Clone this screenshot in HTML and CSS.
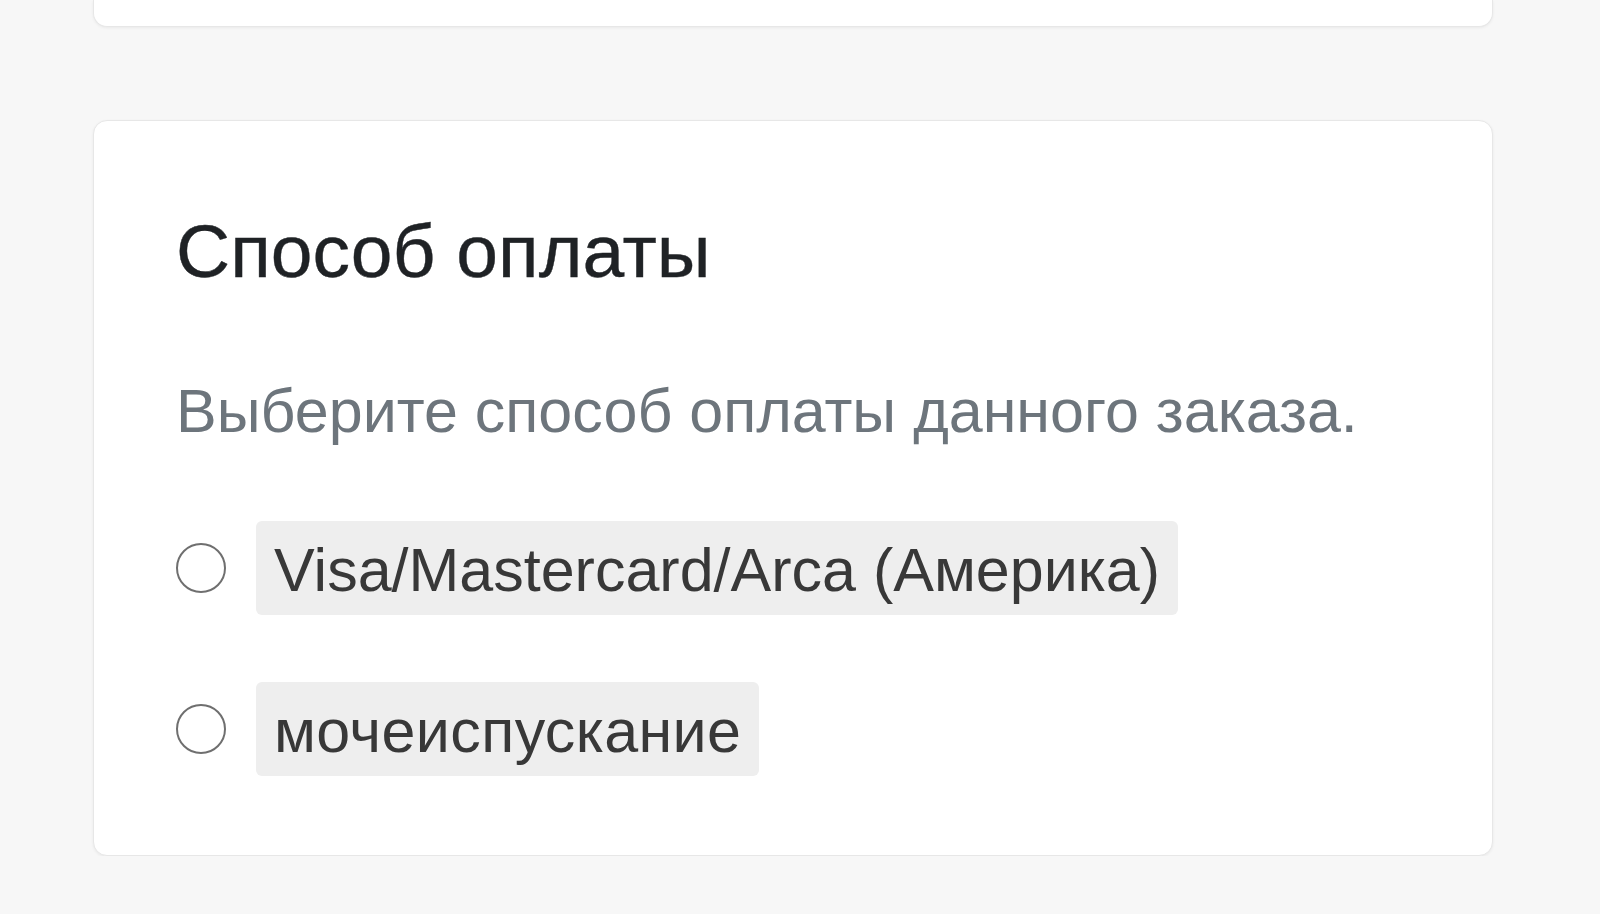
FILE: index.html
```html
<!DOCTYPE html>
<html lang="ru">
<head>
<meta charset="utf-8">
<title>Способ оплаты</title>
<link rel="stylesheet" href="styles.css">
</head>
<body>
<div class="page">
  <div class="card card-prev"></div>
  <section class="card card-pay">
    <h2 class="title">Способ оплаты</h2>
    <p class="subtitle">Выберите способ оплаты данного заказа.</p>
    <div class="options">
      <label class="option">
        <span class="radio"></span>
        <span class="option-text">Visa/Mastercard/Arca (Америка)</span>
      </label>
      <label class="option">
        <span class="radio"></span>
        <span class="option-text option-text-wide">мочеиспускание</span>
      </label>
    </div>
  </section>
</div>
</body>
</html>
```

FILE: styles.css
```css
html, body {
  margin: 0;
  padding: 0;
  background: #f7f7f7;
  font-family: "Liberation Sans", Arial, sans-serif;
}

.page {
  padding-left: 93px;
  width: 1400px;
}

.card {
  background: #ffffff;
  border: 1px solid #e7e7e7;
  border-radius: 14px;
  box-shadow: 0 1px 3px rgba(0, 0, 0, 0.06);
  box-sizing: border-box;
}

.card-prev {
  height: 27px;
  border-top: 0;
  border-radius: 0 0 14px 14px;
}

.card-pay {
  margin-top: 93px;
  padding: 85px 82px 79px;
}

.title {
  margin: 0;
  font-size: 75px;
  line-height: 90px;
  font-weight: 400;
  color: #1f2225;
  -webkit-text-stroke: 0.4px #1f2225;
}

.subtitle {
  margin: 75px 0 0;
  font-size: 61px;
  line-height: 80px;
  color: #6d757c;
}

.options {
  margin-top: 70px;
  display: flex;
  flex-direction: column;
  gap: 67px;
  align-items: flex-start;
}

.option {
  display: flex;
  align-items: center;
  gap: 30px;
}

.radio {
  width: 50px;
  height: 50px;
  box-sizing: border-box;
  border: 2px solid #6f6f6f;
  border-radius: 50%;
  background: #fff;
  flex: none;
}

.option-text {
  display: inline-block;
  background: #eeeeee;
  border-radius: 6px;
  padding: 5px 18px 1px;
  font-size: 61px;
  line-height: 88px;
  color: #383838;
}

.option-text-wide {
  letter-spacing: 0.4px;
}
```
